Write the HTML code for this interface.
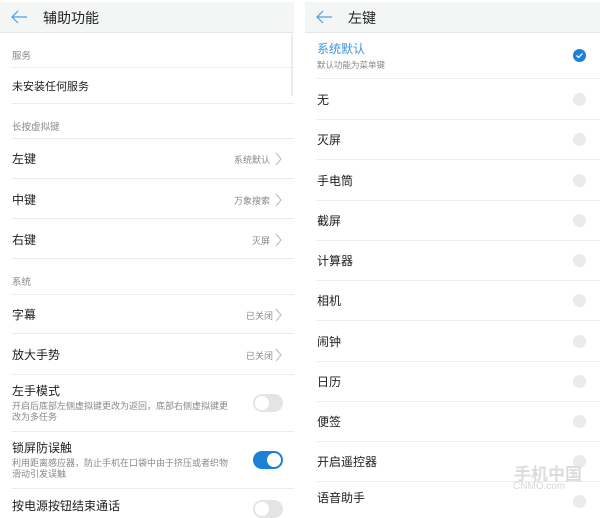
<!DOCTYPE html>
<html><head><meta charset="utf-8"><style>
*{margin:0;padding:0;box-sizing:border-box}
body{width:600px;height:509px;overflow:hidden;background:#fff;position:relative;font-family:"Liberation Sans","Noto Sans CJK SC",sans-serif;color:#222}
.a{position:absolute;white-space:nowrap}
.hd{position:absolute;top:2px;height:31px;background:#f4f5f5;border-bottom:1px solid #e6e6e6}
.ln{position:absolute;height:1px;background:#ececec}
.t{font-size:12px;color:#1e1e1e}
.s{font-size:9.5px;color:#8a8a8a}
.d{font-size:9px;color:#888;line-height:10.5px;white-space:normal}
.v{font-size:9px;color:#888}
.c{position:absolute;width:13px;height:13px;border-radius:50%;background:#eaebeb}
.tg{position:absolute;width:30px;height:18px;border-radius:9px;background:#e3e4e4}
.tg i{position:absolute;top:2px;left:2px;width:14px;height:14px;border-radius:50%;background:#fff}
</style></head><body>
<div class="hd" style="left:0;width:294px"></div>
<svg class="a" style="left:10px;top:10px" width="18" height="14" viewBox="0 0 18 14"><path d="M8 1L2 7l6 6M2 7h15" fill="none" stroke="#4aa0e6" stroke-width="1.2"/></svg>
<div class="a" style="left:43px;top:8px;font-size:14px;color:#222">辅助功能</div>
<div class="a" style="left:291px;top:34px;width:2px;height:62px;background:#ececec"></div>

<div class="a s" style="left:12px;top:48px">服务</div><div class="ln" style="left:11px;width:283px;top:67px"></div>
<div class="a t" style="left:12px;top:78px;font-size:11px">未安装任何服务</div><div class="ln" style="left:11px;width:283px;top:103px"></div>
<div class="a s" style="left:12px;top:119px">长按虚拟键</div><div class="ln" style="left:11px;width:283px;top:138px"></div>
<div class="a t" style="left:12px;top:150px">左键</div><div class="a v" style="left:234px;top:153px">系统默认</div><div class="ln" style="left:11px;width:283px;top:178px"></div>
<div class="a t" style="left:12px;top:191px">中键</div><div class="a v" style="left:234px;top:194px">万象搜索</div><div class="ln" style="left:11px;width:283px;top:218px"></div>
<div class="a t" style="left:12px;top:231px">右键</div><div class="a v" style="left:252px;top:234px">灭屏</div><div class="ln" style="left:11px;width:283px;top:258px"></div>
<div class="a s" style="left:12px;top:274px">系统</div><div class="ln" style="left:11px;width:283px;top:294px"></div>
<div class="a t" style="left:12px;top:306px">字幕</div><div class="a v" style="left:246px;top:309px">已关闭</div><div class="ln" style="left:11px;width:283px;top:333px"></div>
<div class="a t" style="left:12px;top:346px">放大手势</div><div class="a v" style="left:246px;top:349px">已关闭</div><div class="ln" style="left:11px;width:283px;top:374px"></div>
<svg class="a" style="left:275px;top:152px" width="8" height="14"><path d="M1 1l5 6-5 6" fill="none" stroke="#bbb" stroke-width="1"/></svg>
<svg class="a" style="left:275px;top:193px" width="8" height="14"><path d="M1 1l5 6-5 6" fill="none" stroke="#bbb" stroke-width="1"/></svg>
<svg class="a" style="left:275px;top:233px" width="8" height="14"><path d="M1 1l5 6-5 6" fill="none" stroke="#bbb" stroke-width="1"/></svg>
<svg class="a" style="left:275px;top:308px" width="8" height="14"><path d="M1 1l5 6-5 6" fill="none" stroke="#bbb" stroke-width="1"/></svg>
<svg class="a" style="left:275px;top:348px" width="8" height="14"><path d="M1 1l5 6-5 6" fill="none" stroke="#bbb" stroke-width="1"/></svg>
<div class="a t" style="left:12px;top:382px">左手模式</div>
<div class="a d" style="left:12px;top:401px;width:220px">开启后底部左侧虚拟键更改为返回，底部右侧虚拟键更改为多任务</div>
<div class="tg" style="left:253px;top:394px"><i></i></div>
<div class="ln" style="left:11px;width:283px;top:431px"></div>
<div class="a t" style="left:12px;top:439px">锁屏防误触</div>
<div class="a d" style="left:12px;top:458px;width:220px">利用距离感应器，防止手机在口袋中由于挤压或者织物滑动引发误触</div>
<div class="tg" style="left:253px;top:451px;background:#1e7fd8"><i style="left:14px"></i></div>
<div class="ln" style="left:11px;width:283px;top:488px"></div>
<div class="a t" style="left:12px;top:497px">按电源按钮结束通话</div>
<div class="tg" style="left:253px;top:500px"><i></i></div>

<div class="hd" style="left:305px;width:295px"></div>
<svg class="a" style="left:315px;top:10px" width="18" height="14" viewBox="0 0 18 14"><path d="M8 1L2 7l6 6M2 7h15" fill="none" stroke="#4aa0e6" stroke-width="1.2"/></svg>
<div class="a" style="left:348px;top:8px;font-size:14px;color:#222">左键</div>
<div class="a" style="left:317px;top:40px;font-size:12px;color:#3d95e3">系统默认</div>
<div class="a d" style="left:317px;top:60px;font-size:8.5px">默认功能为菜单键</div>
<div class="c" style="left:573px;top:49px;background:#1e7fd8"></div>
<svg class="a" style="left:575px;top:51px" width="9" height="9"><path d="M1.5 4.5l2 2 4-4" fill="none" stroke="#fff" stroke-width="1.3"/></svg>
<div class="ln" style="left:316px;width:284px;top:78px"></div>
<div class="a t" style="left:317px;top:91px">无</div><div class="c" style="left:573px;top:93px"></div><div class="ln" style="left:316px;width:284px;top:119px"></div>
<div class="a t" style="left:317px;top:131px">灭屏</div><div class="c" style="left:573px;top:133px"></div><div class="ln" style="left:316px;width:284px;top:159px"></div>
<div class="a t" style="left:317px;top:172px">手电筒</div><div class="c" style="left:573px;top:174px"></div><div class="ln" style="left:316px;width:284px;top:200px"></div>
<div class="a t" style="left:317px;top:212px">截屏</div><div class="c" style="left:573px;top:214px"></div><div class="ln" style="left:316px;width:284px;top:240px"></div>
<div class="a t" style="left:317px;top:252px">计算器</div><div class="c" style="left:573px;top:254px"></div><div class="ln" style="left:316px;width:284px;top:280px"></div>
<div class="a t" style="left:317px;top:292px">相机</div><div class="c" style="left:573px;top:294px"></div><div class="ln" style="left:316px;width:284px;top:320px"></div>
<div class="a t" style="left:317px;top:333px">闹钟</div><div class="c" style="left:573px;top:335px"></div><div class="ln" style="left:316px;width:284px;top:361px"></div>
<div class="a t" style="left:317px;top:373px">日历</div><div class="c" style="left:573px;top:375px"></div><div class="ln" style="left:316px;width:284px;top:401px"></div>
<div class="a t" style="left:317px;top:413px">便签</div><div class="c" style="left:573px;top:415px"></div><div class="ln" style="left:316px;width:284px;top:441px"></div>
<div class="a t" style="left:317px;top:453px">开启遥控器</div><div class="c" style="left:573px;top:455px"></div><div class="ln" style="left:316px;width:284px;top:481px"></div>
<div class="a t" style="left:317px;top:489px">语音助手</div><div class="c" style="left:573px;top:495px"></div>
<div class="a" style="left:513px;top:481px;font-size:10px;color:#d8d8d8">CNMO.com</div>
<div class="a" style="left:514px;top:460px;font-size:17px;color:#dcdcdc;font-weight:bold">手机中国</div>
</body></html>
